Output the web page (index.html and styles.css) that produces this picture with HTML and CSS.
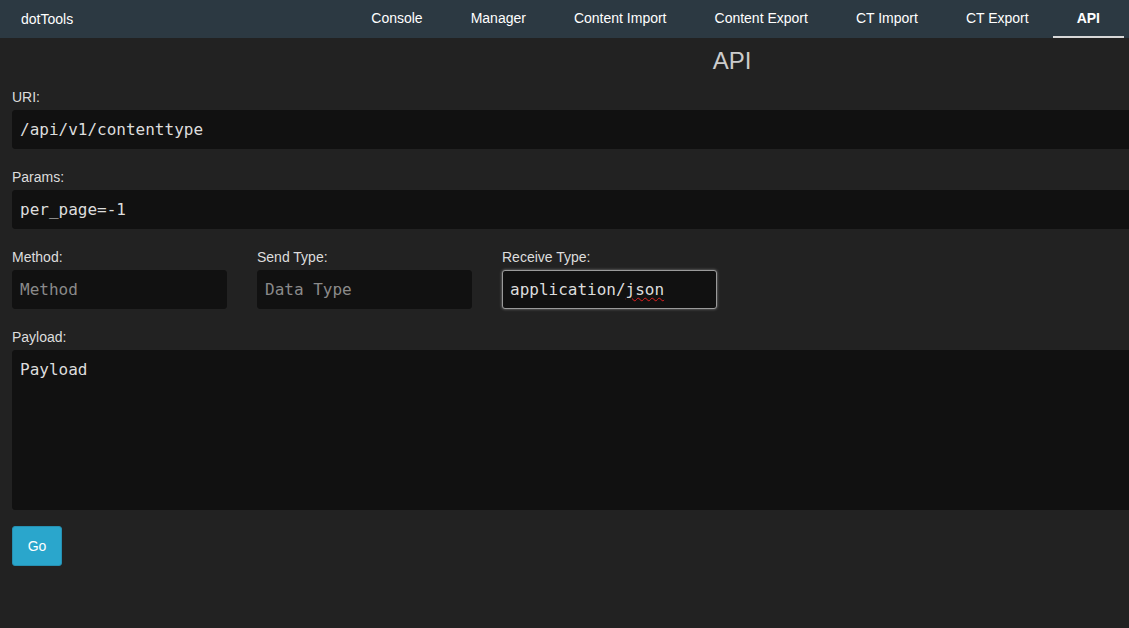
FILE: index.html
```html
<!DOCTYPE html>
<html lang="en">
<head>
<meta charset="utf-8">
<title>dotTools - API</title>
<link rel="stylesheet" href="styles.css">
</head>
<body>
<header class="navbar">
  <div class="brand">dotTools</div>
  <nav class="nav">
    <a class="nav-link">Console</a>
    <a class="nav-link">Manager</a>
    <a class="nav-link">Content Import</a>
    <a class="nav-link">Content Export</a>
    <a class="nav-link">CT Import</a>
    <a class="nav-link">CT Export</a>
    <a class="nav-link active">API</a>
  </nav>
</header>
<main class="page">
  <h1 class="title">API</h1>
  <div class="group">
    <label class="label">URI:</label>
    <input class="field" type="text" value="/api/v1/contenttype">
  </div>
  <div class="group">
    <label class="label">Params:</label>
    <input class="field" type="text" value="per_page=-1">
  </div>
  <div class="row">
    <div class="group">
      <label class="label">Method:</label>
      <input class="field" type="text" placeholder="Method">
    </div>
    <div class="group">
      <label class="label">Send Type:</label>
      <input class="field" type="text" placeholder="Data Type">
    </div>
    <div class="group">
      <label class="label">Receive Type:</label>
      <div class="field focused">application/<span class="misspelled">json</span></div>
    </div>
  </div>
  <div class="group">
    <label class="label">Payload:</label>
    <textarea class="field area">Payload</textarea>
  </div>
  <button class="btn">Go</button>
</main>
</body>
</html>
```
FILE: styles.css
```css
html, body {
  margin: 0;
  padding: 0;
  overflow: hidden;
  background: #222222;
  font-family: "Liberation Sans", Arial, sans-serif;
  font-size: 14px;
  color: #dddddd;
}

.navbar {
  display: flex;
  align-items: stretch;
  justify-content: space-between;
  height: 38px;
  background: #2c3942;
  padding: 0 5px 0 21px;
  width: 1129px;
  box-sizing: border-box;
}

.brand {
  display: flex;
  align-items: center;
  color: #ffffff;
  font-size: 14px;
  padding-bottom: 1px;
}

.nav {
  display: flex;
  align-items: stretch;
}

.nav-link {
  display: flex;
  align-items: center;
  padding: 0 24px 1px;
  color: #ffffff;
  text-decoration: none;
  box-sizing: border-box;
  border-bottom: 2px solid transparent;
}

.nav-link.active {
  font-weight: bold;
  border-bottom-color: #d8d8d8;
}

.page {
  width: 1440px;
  padding-left: 12px;
}

.title {
  margin: 10px 0 13px;
  font-size: 24px;
  line-height: 26px;
  font-weight: normal;
  text-align: center;
  color: #cccccc;
}

.group {
  display: flex;
  flex-direction: column;
  margin-bottom: 18px;
}

.label {
  display: block;
  line-height: 20px;
  margin-bottom: 3px;
  color: #dddddd;
}

.field {
  box-sizing: border-box;
  width: 100%;
  height: 39px;
  margin: 0;
  padding: 0 7px;
  background: #111111;
  border: 1px solid #111111;
  border-radius: 3px;
  color: #dddddd;
  font-family: "DejaVu Sans Mono", "Liberation Mono", monospace;
  font-size: 16px;
  outline: none;
}

.field::placeholder {
  color: #8a8a8a;
}

div.field {
  display: flex;
  align-items: center;
  white-space: pre;
}

.field.focused {
  border-color: #9a9a9a;
  box-shadow: 0 0 3px rgba(255, 255, 255, 0.45);
}

.misspelled {
  text-decoration: underline wavy #e02020;
  text-decoration-thickness: 1px;
  text-underline-offset: 2px;
}

.row {
  display: grid;
  grid-template-columns: repeat(6, 1fr);
  column-gap: 30px;
}

.area {
  height: 160px;
  padding: 9px 7px;
  resize: none;
  line-height: 20px;
  display: block;
}

.group:has(.area) {
  margin-bottom: 16px;
}

.btn {
  display: block;
  width: 50px;
  height: 40px;
  padding: 0;
  border: 1px solid #2690b2;
  border-radius: 3px;
  background: #2aa6cc;
  color: #ffffff;
  font-family: "Liberation Sans", Arial, sans-serif;
  font-size: 14px;
}
```
